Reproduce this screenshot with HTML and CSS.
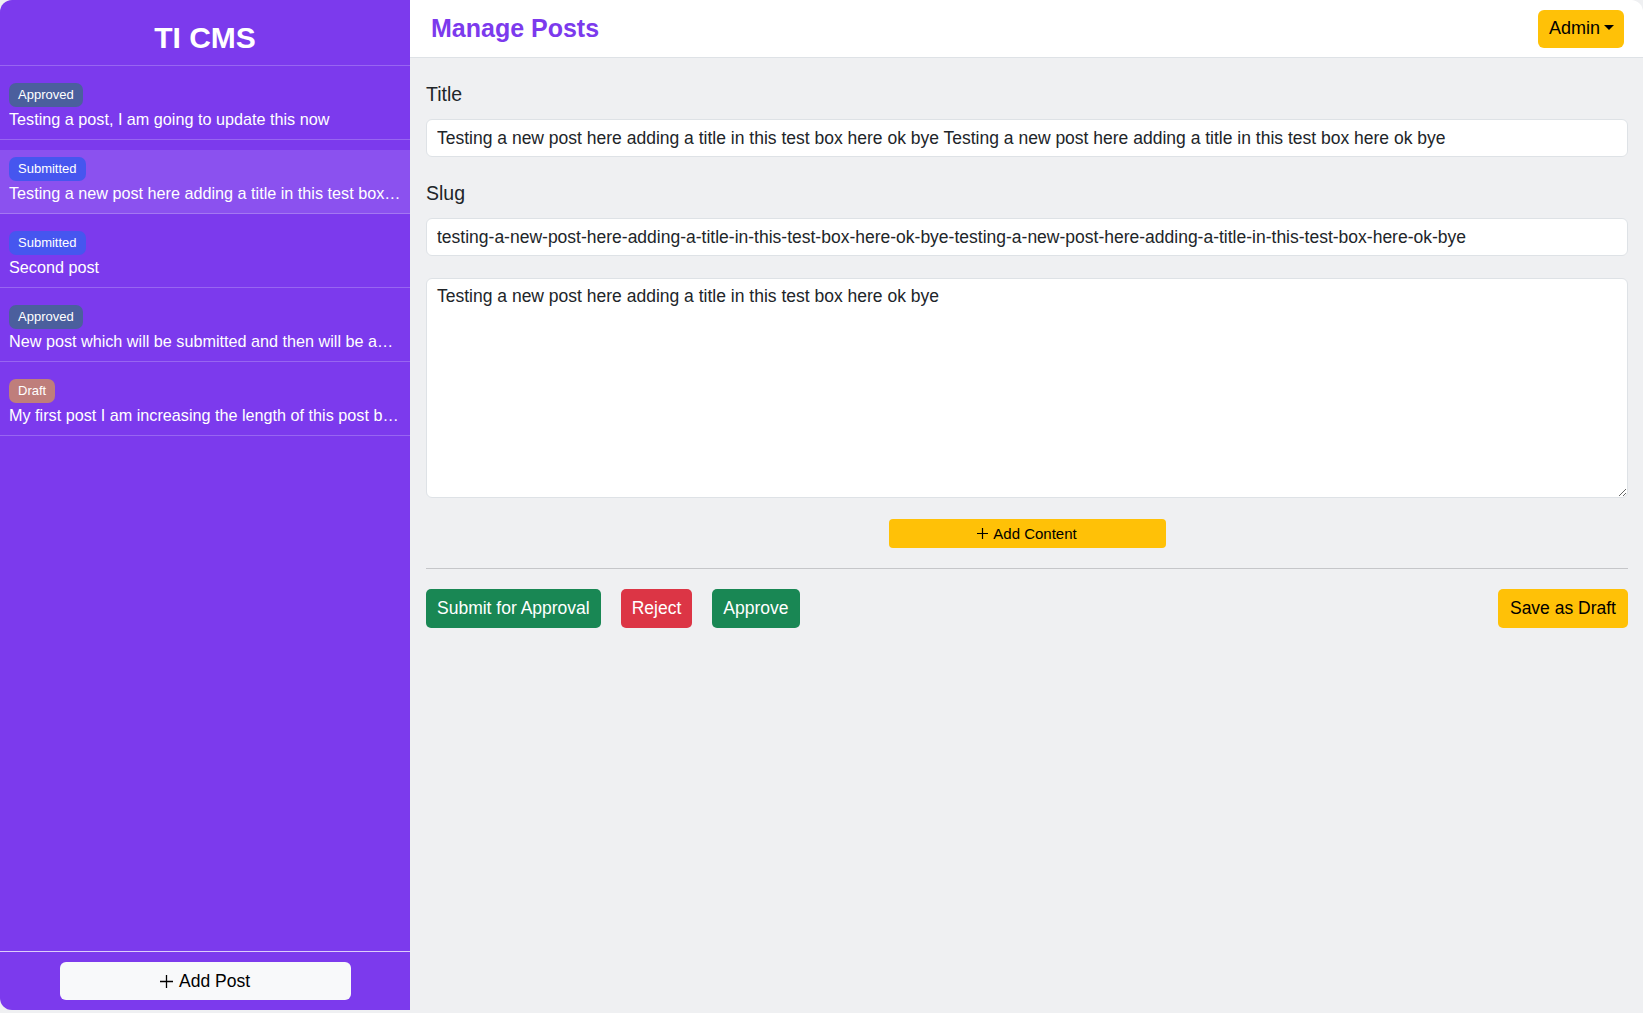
FILE: index.html
```html
<!DOCTYPE html>
<html lang="en">
<head>
    <meta charset="UTF-8">
    <meta name="viewport" content="width=device-width, initial-scale=1.0">
    <title>TI CMS - Manage Posts</title>
    <link rel="stylesheet" href="styles.css">
</head>
<body>
    <div class="app">
        <aside class="sidebar">
            <div class="brand">TI CMS</div>
            <ul class="post-list">
                <li class="post-item">
                    <span class="badge badge-approved">Approved</span>
                    <p class="post-title">Testing a post, I am going to update this now</p>
                </li>
                <li class="post-item active">
                    <span class="badge badge-submitted">Submitted</span>
                    <p class="post-title">Testing a new post here adding a title in this test box here ok bye Testing a new post here adding a title in this test box here ok bye</p>
                </li>
                <li class="post-item">
                    <span class="badge badge-submitted">Submitted</span>
                    <p class="post-title">Second post</p>
                </li>
                <li class="post-item">
                    <span class="badge badge-approved">Approved</span>
                    <p class="post-title">New post which will be submitted and then will be approved</p>
                </li>
                <li class="post-item">
                    <span class="badge badge-draft">Draft</span>
                    <p class="post-title">My first post I am increasing the length of this post by adding more words</p>
                </li>
            </ul>
            <div class="sidebar-footer">
                <button class="add-post">
                    <svg class="plus-icon" width="13" height="13" viewBox="0 0 13 13"><path d="M6.5 0v13M0 6.5h13" stroke="currentColor" stroke-width="1.3" fill="none"/></svg>
                    Add Post
                </button>
            </div>
        </aside>

        <main class="main">
            <header class="topbar">
                <h1 class="page-title">Manage Posts</h1>
                <button class="admin-btn">Admin</button>
            </header>

            <section class="editor">
                <div class="field">
                    <label for="title">Title</label>
                    <input type="text" id="title" value="Testing a new post here adding a title in this test box here ok bye Testing a new post here adding a title in this test box here ok bye">
                </div>
                <div class="field">
                    <label for="slug">Slug</label>
                    <input type="text" id="slug" value="testing-a-new-post-here-adding-a-title-in-this-test-box-here-ok-bye-testing-a-new-post-here-adding-a-title-in-this-test-box-here-ok-bye">
                </div>
                <textarea id="content">Testing a new post here adding a title in this test box here ok bye</textarea>

                <div class="add-content-row">
                    <button class="add-content">
                        <svg class="plus-icon" width="11" height="11" viewBox="0 0 11 11"><path d="M5.5 0v11M0 5.5h11" stroke="currentColor" stroke-width="1.2" fill="none"/></svg>
                        Add Content
                    </button>
                </div>

                <hr class="divider">

                <div class="actions">
                    <button class="btn btn-green">Submit for Approval</button>
                    <button class="btn btn-red">Reject</button>
                    <button class="btn btn-green">Approve</button>
                    <button class="btn btn-yellow save-draft">Save as Draft</button>
                </div>
            </section>
        </main>
    </div>
</body>
</html>
```

FILE: styles.css
```css
body {
    margin: 0;
    background-color: #eff0f2;
    font-family: "Liberation Sans", Arial, sans-serif;
    color: #212529;
}
.app {
    display: flex;
    height: 1010px;
    border-radius: 12px;
    overflow: hidden;
}

/* sidebar */
.sidebar {
    width: 410px;
    flex-shrink: 0;
    background-color: #7c3aed;
    color: #fff;
    display: flex;
    flex-direction: column;
}
.brand {
    padding: 20px 0 9px;
    font-size: 30px;
    line-height: 36px;
    font-weight: bold;
    text-align: center;
    border-bottom: 1px solid rgba(255, 255, 255, 0.22);
}
.post-list {
    list-style: none;
    margin: 0;
    padding: 0;
}
.post-item {
    margin-top: 10px;
    padding: 7px 9px 7px;
    border-bottom: 1px solid rgba(255, 255, 255, 0.22);
}
.post-item.active {
    background-color: rgba(255, 255, 255, 0.12);
}
.badge {
    display: inline-block;
    height: 24px;
    line-height: 24px;
    padding: 0 9px;
    font-size: 13px;
    border-radius: 7px;
    color: #fff;
    vertical-align: top;
}
.badge-approved {
    background-color: #4b5f9d;
}
.badge-submitted {
    background-color: #4656ef;
}
.badge-draft {
    background-color: #bf7e7b;
}
.post-title {
    margin: 0;
    font-size: 16.2px;
    line-height: 25px;
    white-space: nowrap;
    overflow: hidden;
    text-overflow: ellipsis;
}
.sidebar-footer {
    margin-top: auto;
    border-top: 1px solid rgba(255, 255, 255, 0.75);
    padding: 10px 0;
    display: flex;
    justify-content: center;
}
.add-post {
    width: 291px;
    height: 38px;
    background-color: #f8f9fa;
    border: none;
    border-radius: 6px;
    font-family: inherit;
    font-size: 17.5px;
    color: #000;
    display: flex;
    align-items: center;
    justify-content: center;
    gap: 6px;
}
.plus-icon {
    display: block;
}

/* main */
.main {
    flex: 1;
    display: flex;
    flex-direction: column;
    background-color: #eff0f2;
}
.topbar {
    height: 57px;
    background-color: #fff;
    border-bottom: 1px solid #dee2e6;
    display: flex;
    align-items: center;
    justify-content: space-between;
    padding: 0 19px 0 21px;
}
.page-title {
    margin: 0;
    font-size: 25px;
    font-weight: bold;
    color: #7c3aed;
}
.admin-btn {
    height: 38px;
    padding: 0 10px 0 11px;
    background-color: #ffc107;
    border: none;
    border-radius: 6px;
    font-family: inherit;
    font-size: 18px;
    color: #000;
}
.admin-btn::after {
    content: "";
    display: inline-block;
    margin-left: 4px;
    vertical-align: 4px;
    border-top: 5px solid #000;
    border-left: 5px solid transparent;
    border-right: 5px solid transparent;
}
.editor {
    padding: 21px 15px 0 16px;
}
.field {
    margin-bottom: 21px;
}
.field label {
    display: block;
    font-size: 19.5px;
    line-height: 30px;
    margin-bottom: 10px;
}
.field input, textarea {
    display: block;
    width: 100%;
    box-sizing: border-box;
    border: 1px solid #dee2e6;
    border-radius: 6px;
    background-color: #fff;
    font-family: inherit;
    font-size: 17.5px;
    color: #212529;
}
.field input {
    height: 38px;
    padding: 1px 10px 0;
}
textarea {
    height: 220px;
    padding: 7px 10px;
    margin-top: 22px;
    line-height: normal;
}
.add-content-row {
    display: flex;
    justify-content: center;
    margin-top: 21px;
}
.add-content {
    width: 277px;
    height: 29px;
    background-color: #ffc107;
    border: none;
    border-radius: 4px;
    font-family: inherit;
    font-size: 15px;
    color: #000;
    display: flex;
    align-items: center;
    justify-content: center;
    gap: 5px;
}
.divider {
    margin: 20px 0 0;
    border: none;
    border-top: 1px solid #c5c6c9;
}
.actions {
    display: flex;
    gap: 20px;
    margin-top: 20px;
}
.btn {
    height: 39px;
    padding: 0 11px;
    border: none;
    border-radius: 5px;
    font-family: inherit;
    font-size: 17.5px;
    color: #fff;
}
.btn-green {
    background-color: #198754;
}
.btn-red {
    background-color: #dc3545;
}
.btn-yellow {
    background-color: #ffc107;
    color: #000;
}
.save-draft {
    margin-left: auto;
    padding: 0 12px;
}
```
